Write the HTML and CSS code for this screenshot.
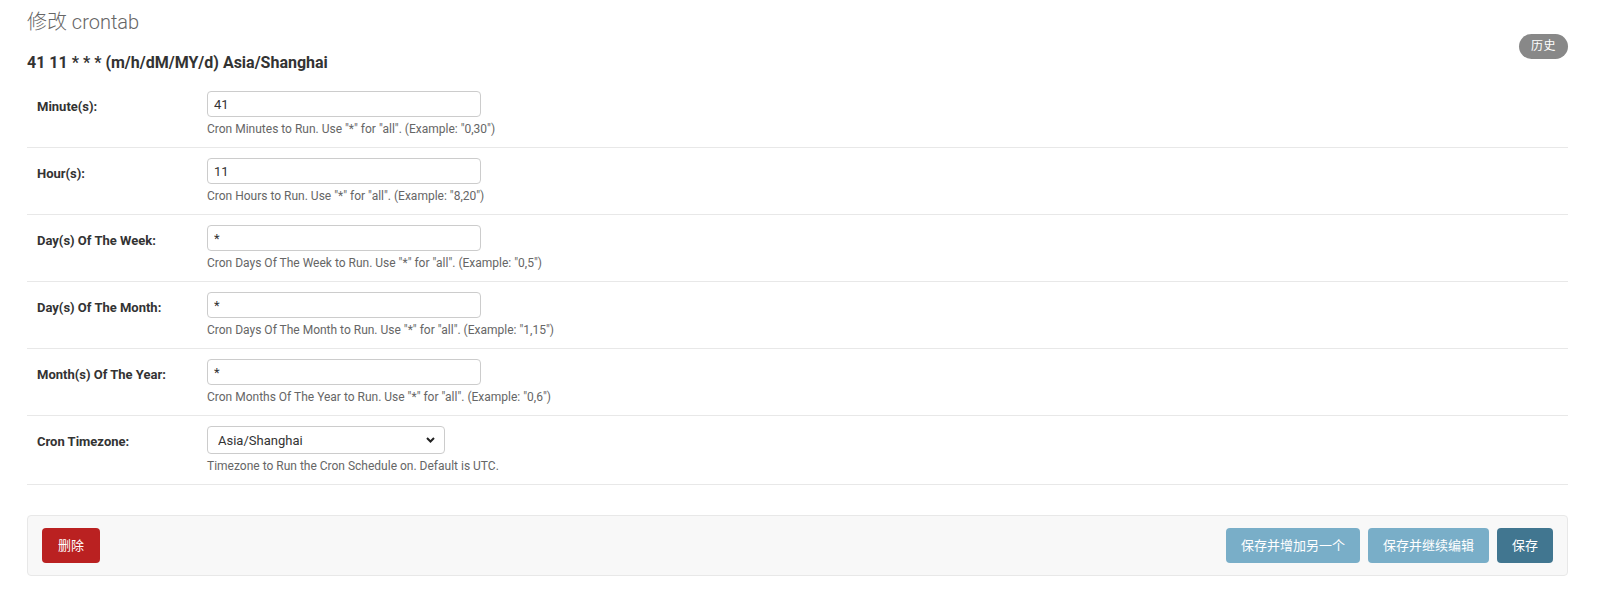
FILE: index.html
```html
<!DOCTYPE html>
<html lang="zh-hans">
<head>
<meta charset="utf-8">
<title>修改 crontab</title>
<link rel="stylesheet" href="styles.css">
</head>
<body>
<div class="content">
  <h1 class="title">修改 crontab</h1>
  <div class="header-row">
    <h2 class="obj-name">41 11 * * * (m/h/dM/MY/d) Asia/Shanghai</h2>
    <a class="history" href="#">历史</a>
  </div>
  <form class="form">
    <div class="form-row">
      <label class="label">Minute(s):</label>
      <div class="field">
        <input class="text-input" type="text" value="41">
        <div class="help">Cron Minutes to Run. Use "*" for "all". (Example: "0,30")</div>
      </div>
    </div>
    <div class="form-row">
      <label class="label">Hour(s):</label>
      <div class="field">
        <input class="text-input" type="text" value="11">
        <div class="help">Cron Hours to Run. Use "*" for "all". (Example: "8,20")</div>
      </div>
    </div>
    <div class="form-row">
      <label class="label">Day(s) Of The Week:</label>
      <div class="field">
        <input class="text-input" type="text" value="*">
        <div class="help">Cron Days Of The Week to Run. Use "*" for "all". (Example: "0,5")</div>
      </div>
    </div>
    <div class="form-row">
      <label class="label">Day(s) Of The Month:</label>
      <div class="field">
        <input class="text-input" type="text" value="*">
        <div class="help">Cron Days Of The Month to Run. Use "*" for "all". (Example: "1,15")</div>
      </div>
    </div>
    <div class="form-row">
      <label class="label">Month(s) Of The Year:</label>
      <div class="field">
        <input class="text-input" type="text" value="*">
        <div class="help">Cron Months Of The Year to Run. Use "*" for "all". (Example: "0,6")</div>
      </div>
    </div>
    <div class="form-row">
      <label class="label">Cron Timezone:</label>
      <div class="field">
        <div class="select-wrap">
          <select class="select">
            <option>Asia/Shanghai</option>
          </select>
          <svg class="chevron" width="9" height="6" viewBox="0 0 9 6"><path d="M1 1 L4.5 4.5 L8 1" fill="none" stroke="#222" stroke-width="2"/></svg>
        </div>
        <div class="help">Timezone to Run the Cron Schedule on. Default is UTC.</div>
      </div>
    </div>
  </form>
  <div class="submit-row">
    <a class="btn btn-delete" href="#">删除</a>
    <div class="submit-right">
      <button class="btn btn-light" type="button">保存并增加另一个</button>
      <button class="btn btn-light" type="button">保存并继续编辑</button>
      <button class="btn btn-default" type="button">保存</button>
    </div>
  </div>
</div>
</body>
</html>
```
FILE: styles.css
```css
* { box-sizing: border-box; }
html, body {
  margin: 0;
  padding: 0;
  background: #fff;
  font-family: Roboto, "Noto Sans CJK SC", "Liberation Sans", sans-serif;
  color: #333;
}
.content {
  padding: 0 33px 0 27px;
}
.title {
  margin: 10px 0 0;
  font-size: 20px;
  line-height: 24px;
  font-weight: 300;
  color: #666;
}
.header-row {
  display: flex;
  justify-content: space-between;
  align-items: flex-start;
}
.obj-name {
  margin: 19px 0 0;
  font-size: 16px;
  line-height: 20px;
  font-weight: bold;
  color: #333;
}
.history {
  display: block;
  background: #888;
  color: #fff;
  text-decoration: none;
  font-size: 12px;
  line-height: 19px;
  padding: 3px 12px;
  border-radius: 15px;
  letter-spacing: 0.5px;
}
.form {
  margin: 8px 0 30px;
}
.form-row {
  display: flex;
  padding: 10px;
  border-bottom: 1px solid #e8e8e8;
}
.label {
  flex: 0 0 170px;
  padding: 9px 10px 0 0;
  font-size: 13px;
  line-height: 13px;
  font-weight: bold;
  color: #333;
}
.field {
  display: flex;
  flex-direction: column;
  align-items: flex-start;
}
.text-input {
  width: 274px;
  height: 26px;
  padding: 5px 6px;
  border: 1px solid #ccc;
  border-radius: 4px;
  font-family: inherit;
  font-size: 13px;
  color: #333;
  background: #fff;
  margin: 0;
}
.select-wrap {
  position: relative;
  width: 238px;
  height: 28px;
}
.select {
  -webkit-appearance: none;
  appearance: none;
  width: 238px;
  height: 28px;
  padding: 0 24px 0 10px;
  border: 1px solid #ccc;
  border-radius: 4px;
  font-family: inherit;
  font-size: 13px;
  color: #333;
  background: #fff;
  margin: 0;
}
.chevron {
  position: absolute;
  right: 10px;
  top: 11px;
  pointer-events: none;
}
.help {
  margin-top: 4px;
  font-size: 12px;
  line-height: 16px;
  color: #666;
}
.submit-row {
  display: flex;
  justify-content: space-between;
  align-items: center;
  padding: 12px 14px;
  background: #f8f8f8;
  border: 1px solid #e8e8e8;
  border-radius: 4px;
}
.submit-right {
  display: flex;
  gap: 8px;
}
.btn {
  display: block;
  border: none;
  margin: 0;
  padding: 10px 15px;
  height: 35px;
  font-family: inherit;
  font-size: 13px;
  line-height: 15px;
  color: #fff;
  border-radius: 4px;
  text-decoration: none;
  cursor: pointer;
}
.btn-delete {
  background: #ba2121;
  padding: 10px 16px;
}
.btn-light {
  background: #79aec8;
}
.btn-default {
  background: #417690;
}
```
